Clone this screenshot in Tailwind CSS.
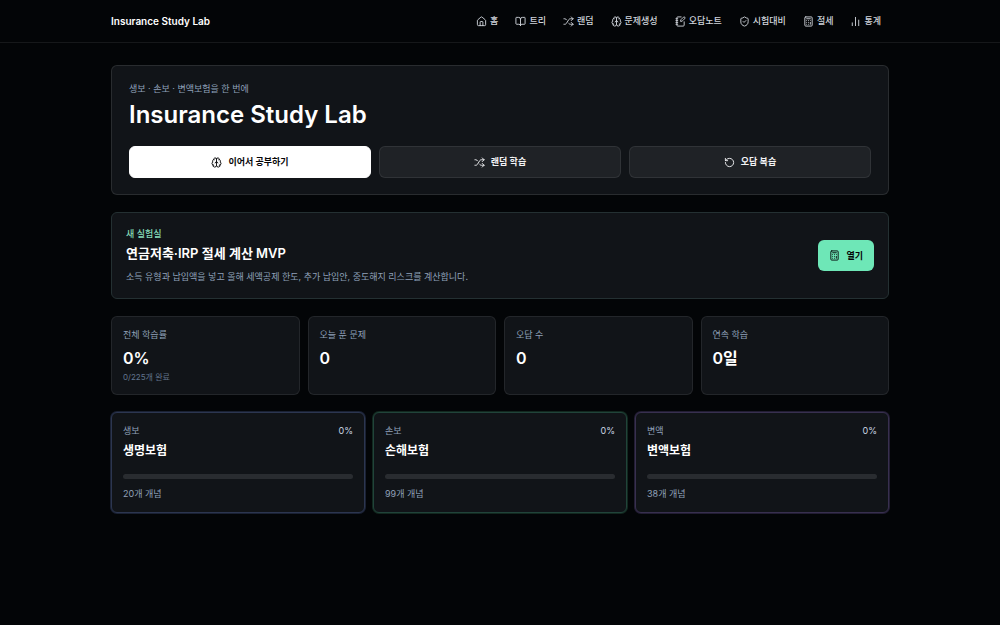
<!DOCTYPE html>
<html lang="ko">
<head>
    <meta charset="UTF-8">
    <meta name="viewport" content="width=device-width, initial-scale=1.0">
    <title>Insurance Study Lab</title>
    <script src="https://cdn.jsdelivr.net/npm/@tailwindcss/browser@4"></script>
</head>
<body class="min-h-screen bg-[#030507] font-['Inter','Noto_Sans_CJK_KR',sans-serif] text-white antialiased">

    <!-- Icons -->
    <svg class="hidden">
        <symbol id="home" viewBox="0 0 24 24"><path d="M15 21v-8a1 1 0 0 0-1-1h-4a1 1 0 0 0-1 1v8"/><path d="M3 10a2 2 0 0 1 .709-1.528l7-6a2 2 0 0 1 2.582 0l7 6A2 2 0 0 1 21 10v9a2 2 0 0 1-2 2H5a2 2 0 0 1-2-2z"/></symbol>
        <symbol id="book" viewBox="0 0 24 24"><path d="M12 7v14"/><path d="M3 18a1 1 0 0 1-1-1V4a1 1 0 0 1 1-1h5a4 4 0 0 1 4 4 4 4 0 0 1 4-4h5a1 1 0 0 1 1 1v13a1 1 0 0 1-1 1h-6a3 3 0 0 0-3 3 3 3 0 0 0-3-3z"/></symbol>
        <symbol id="shuffle" viewBox="0 0 24 24"><path d="m18 14 4 4-4 4"/><path d="m18 2 4 4-4 4"/><path d="M2 18h1.973a4 4 0 0 0 3.3-1.7l5.454-8.6a4 4 0 0 1 3.3-1.7H22"/><path d="M2 6h1.972a4 4 0 0 1 3.6 2.2"/><path d="M22 18h-6.041a4 4 0 0 1-3.3-1.8l-.359-.45"/></symbol>
        <symbol id="brain" viewBox="0 0 24 24"><path d="M12 18V5"/><path d="M15 13a4.17 4.17 0 0 1-3-4 4.17 4.17 0 0 1-3 4"/><path d="M17.598 6.5A3 3 0 1 0 12 5a3 3 0 1 0-5.598 1.5"/><path d="M17.997 5.125a4 4 0 0 1 2.526 5.77"/><path d="M18 18a4 4 0 0 0 2-7.464"/><path d="M19.967 17.483A4 4 0 1 1 12 18a4 4 0 1 1-7.967-.517"/><path d="M6 18a4 4 0 0 1-2-7.464"/><path d="M6.003 5.125a4 4 0 0 0-2.526 5.77"/></symbol>
        <symbol id="notebook" viewBox="0 0 24 24"><path d="M13.4 2H6a2 2 0 0 0-2 2v16a2 2 0 0 0 2 2h12a2 2 0 0 0 2-2v-7.4"/><path d="M2 6h4"/><path d="M2 10h4"/><path d="M2 14h4"/><path d="M2 18h4"/><path d="M21.378 5.626a1 1 0 1 0-3.004-3.004l-5.01 5.012a2 2 0 0 0-.506.854l-.837 2.87a.5.5 0 0 0 .62.62l2.87-.837a2 2 0 0 0 .854-.506z"/></symbol>
        <symbol id="shield" viewBox="0 0 24 24"><path d="M20 13c0 5-3.5 7.5-7.66 8.95a1 1 0 0 1-.67-.01C7.5 20.5 4 18 4 13V6a1 1 0 0 1 1-1c2 0 4.5-1.2 6.24-2.72a1.17 1.17 0 0 1 1.52 0C14.51 3.81 17 5 19 5a1 1 0 0 1 1 1z"/><path d="m9 12 2 2 4-4"/></symbol>
        <symbol id="calculator" viewBox="0 0 24 24"><rect width="16" height="20" x="4" y="2" rx="2"/><path d="M8 6h8"/><path d="M16 14v4"/><path d="M16 10h.01"/><path d="M12 10h.01"/><path d="M8 10h.01"/><path d="M12 14h.01"/><path d="M8 14h.01"/><path d="M12 18h.01"/><path d="M8 18h.01"/></symbol>
        <symbol id="chart" viewBox="0 0 24 24"><path d="M5 21v-6"/><path d="M12 21V3"/><path d="M19 21V9"/></symbol>
        <symbol id="rotate" viewBox="0 0 24 24"><path d="M3 12a9 9 0 1 0 9-9 9.75 9.75 0 0 0-6.74 2.74L3 8"/><path d="M3 3v5h5"/></symbol>
    </svg>

    <!-- Header -->
    <header class="border-b border-white/8">
        <div class="mx-auto flex h-[42px] w-full max-w-[800px] items-center justify-between px-[11px]">
            <a href="#" class="text-[10px] font-semibold whitespace-nowrap">Insurance Study Lab</a>
            <nav class="flex gap-px text-[9px] font-medium whitespace-nowrap text-gray-300">
                <a href="#" class="flex items-center gap-[3px] px-2"><svg class="size-[11px] fill-none stroke-current stroke-2 [stroke-linecap:round] [stroke-linejoin:round]"><use href="#home"/></svg>홈</a>
                <a href="#" class="flex items-center gap-[3px] px-2"><svg class="size-[11px] fill-none stroke-current stroke-2 [stroke-linecap:round] [stroke-linejoin:round]"><use href="#book"/></svg>트리</a>
                <a href="#" class="flex items-center gap-[3px] px-2"><svg class="size-[11px] fill-none stroke-current stroke-2 [stroke-linecap:round] [stroke-linejoin:round]"><use href="#shuffle"/></svg>랜덤</a>
                <a href="#" class="flex items-center gap-[3px] px-2"><svg class="size-[11px] fill-none stroke-current stroke-2 [stroke-linecap:round] [stroke-linejoin:round]"><use href="#brain"/></svg>문제생성</a>
                <a href="#" class="flex items-center gap-[3px] px-2"><svg class="size-[11px] fill-none stroke-current stroke-2 [stroke-linecap:round] [stroke-linejoin:round]"><use href="#notebook"/></svg>오답노트</a>
                <a href="#" class="flex items-center gap-[3px] px-2"><svg class="size-[11px] fill-none stroke-current stroke-2 [stroke-linecap:round] [stroke-linejoin:round]"><use href="#shield"/></svg>시험대비</a>
                <a href="#" class="flex items-center gap-[3px] px-2"><svg class="size-[11px] fill-none stroke-current stroke-2 [stroke-linecap:round] [stroke-linejoin:round]"><use href="#calculator"/></svg>절세</a>
                <a href="#" class="flex items-center gap-[3px] px-2"><svg class="size-[11px] fill-none stroke-current stroke-2 [stroke-linecap:round] [stroke-linejoin:round]"><use href="#chart"/></svg>통계</a>
            </nav>
        </div>
    </header>

    <main class="mx-auto flex w-full max-w-[800px] flex-col gap-[17px] px-[11px] py-[22px]">

        <!-- Hero -->
        <section class="rounded-md border border-white/10 bg-[#111418] px-[17px] py-4">
            <p class="text-[9px] leading-[14px] text-slate-400">생보 · 손보 · 변액보험을 한 번에</p>
            <h1 class="mt-1 text-2xl leading-[30px] font-semibold">Insurance Study Lab</h1>
            <div class="mt-4 grid grid-cols-3 gap-2 text-[9px] font-semibold">
                <button type="button" class="flex h-8 items-center justify-center gap-[6px] rounded-md border border-white bg-white text-[#050608]">
                    <svg class="size-[11px] fill-none stroke-current stroke-2 [stroke-linecap:round] [stroke-linejoin:round]"><use href="#brain"/></svg>이어서 공부하기
                </button>
                <button type="button" class="flex h-8 items-center justify-center gap-[6px] rounded-md border border-white/8 bg-[#1f2226] text-gray-100">
                    <svg class="size-[11px] fill-none stroke-current stroke-2 [stroke-linecap:round] [stroke-linejoin:round]"><use href="#shuffle"/></svg>랜덤 학습
                </button>
                <button type="button" class="flex h-8 items-center justify-center gap-[6px] rounded-md border border-white/8 bg-[#1f2226] text-gray-100">
                    <svg class="size-[11px] fill-none stroke-current stroke-2 [stroke-linecap:round] [stroke-linejoin:round]"><use href="#rotate"/></svg>오답 복습
                </button>
            </div>
        </section>

        <!-- Tax lab -->
        <section class="flex items-center justify-between rounded-md border border-[#243032] bg-[#111418] p-[14px]">
            <div>
                <p class="text-[9px] leading-[14px] font-medium text-[#86dcb8]">새 실험실</p>
                <h2 class="mt-[2px] text-[13px] leading-5 font-semibold">연금저축·IRP 절세 계산 MVP</h2>
                <p class="mt-[6px] text-[9px] leading-[15px] text-slate-400">소득 유형과 납입액을 넣고 올해 세액공제 한도, 추가 납입안, 중도해지 리스크를 계산합니다.</p>
            </div>
            <button type="button" class="flex h-[31px] items-center gap-[6px] rounded-md bg-[#6ee7b7] px-[11px] text-[9px] font-semibold text-[#050608]">
                <svg class="size-[11px] fill-none stroke-current stroke-2 [stroke-linecap:round] [stroke-linejoin:round]"><use href="#calculator"/></svg>열기
            </button>
        </section>

        <!-- Stats -->
        <section class="grid grid-cols-4 gap-2">
            <div class="rounded-md border border-white/8 bg-[#111418] p-[11px]">
                <p class="text-[9px] leading-[14px] text-slate-400">전체 학습률</p>
                <p class="mt-[6px] text-base leading-5 font-semibold">0%</p>
                <p class="mt-[3px] text-[8px] leading-3 text-slate-500">0/225개 완료</p>
            </div>
            <div class="rounded-md border border-white/8 bg-[#111418] p-[11px]">
                <p class="text-[9px] leading-[14px] text-slate-400">오늘 푼 문제</p>
                <p class="mt-[6px] text-base leading-5 font-semibold">0</p>
            </div>
            <div class="rounded-md border border-white/8 bg-[#111418] p-[11px]">
                <p class="text-[9px] leading-[14px] text-slate-400">오답 수</p>
                <p class="mt-[6px] text-base leading-5 font-semibold">0</p>
            </div>
            <div class="rounded-md border border-white/8 bg-[#111418] p-[11px]">
                <p class="text-[9px] leading-[14px] text-slate-400">연속 학습</p>
                <p class="mt-[6px] text-base leading-5 font-semibold">0일</p>
            </div>
        </section>

        <!-- Subjects -->
        <section class="grid grid-cols-3 gap-2">
            <a href="#" class="rounded-md border border-[#2c3650] bg-[#111418] p-[11px] ring-1 ring-[#1a2133]">
                <div class="flex justify-between text-[9px] leading-[14px]"><span class="text-slate-400">생보</span><span class="text-slate-300">0%</span></div>
                <h3 class="mt-1 text-[12px] leading-[18px] font-semibold">생명보험</h3>
                <div class="mt-[14px] h-[5px] rounded-full bg-[#292c30]"></div>
                <p class="mt-2 text-[9px] leading-[14px] text-slate-400">20개 개념</p>
            </a>
            <a href="#" class="rounded-md border border-[#21443a] bg-[#111418] p-[11px] ring-1 ring-[#12281f]">
                <div class="flex justify-between text-[9px] leading-[14px]"><span class="text-slate-400">손보</span><span class="text-slate-300">0%</span></div>
                <h3 class="mt-1 text-[12px] leading-[18px] font-semibold">손해보험</h3>
                <div class="mt-[14px] h-[5px] rounded-full bg-[#292c30]"></div>
                <p class="mt-2 text-[9px] leading-[14px] text-slate-400">99개 개념</p>
            </a>
            <a href="#" class="rounded-md border border-[#38304f] bg-[#111418] p-[11px] ring-1 ring-[#221d33]">
                <div class="flex justify-between text-[9px] leading-[14px]"><span class="text-slate-400">변액</span><span class="text-slate-300">0%</span></div>
                <h3 class="mt-1 text-[12px] leading-[18px] font-semibold">변액보험</h3>
                <div class="mt-[14px] h-[5px] rounded-full bg-[#292c30]"></div>
                <p class="mt-2 text-[9px] leading-[14px] text-slate-400">38개 개념</p>
            </a>
        </section>
    </main>
</body>
</html>
